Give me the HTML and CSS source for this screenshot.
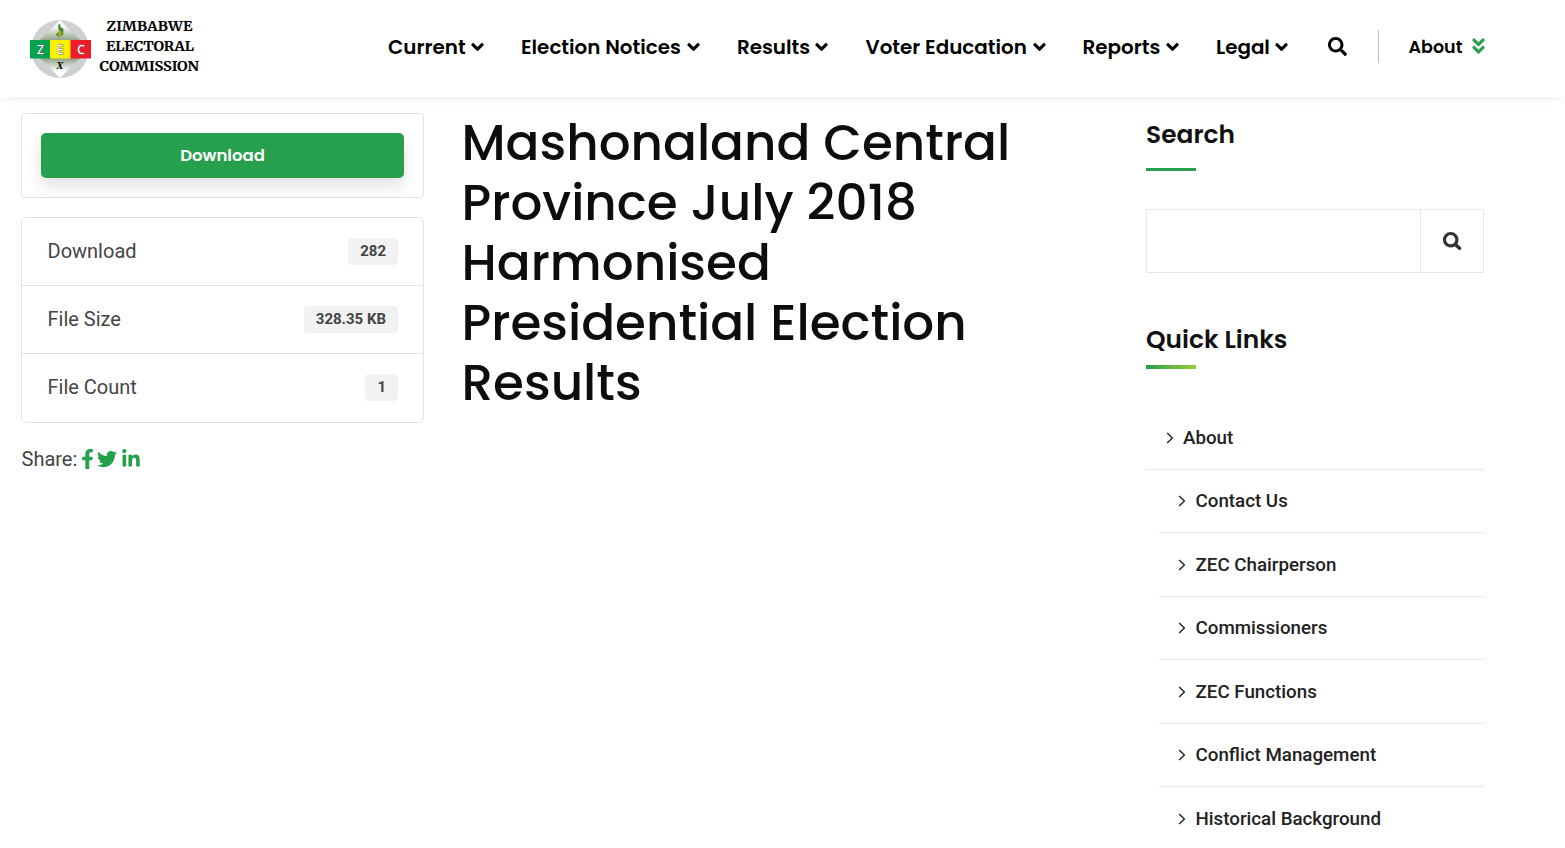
FILE: index.html
```html
<!DOCTYPE html>
<html lang="en">
<head>
<meta charset="utf-8">
<title>Mashonaland Central Province July 2018 Harmonised Presidential Election Results</title>
<link rel="stylesheet" href="styles.css">
</head>
<body>
<svg class="defs" width="0" height="0" aria-hidden="true">
  <symbol id="down" viewBox="0 0 320 512"><path d="M143 352.3L7 216.3c-9.4-9.4-9.4-24.6 0-33.9l22.6-22.6c9.4-9.4 24.6-9.4 33.9 0l96.4 96.4 96.4-96.4c9.4-9.4 24.6-9.4 33.9 0l22.6 22.6c9.4 9.4 9.4 24.6 0 33.9l-136 136c-9.2 9.4-24.4 9.4-33.8 0z"/></symbol>
  <symbol id="right" viewBox="0 0 8 12"><path d="M1.200 1 6.400 6 1.200 11" fill="none" stroke="currentColor" stroke-width="1.400"/></symbol>
</svg>
<header class="header">
  <a class="logo">
    <svg width="185" height="70" viewBox="0 0 185 70">
      <defs>
        <linearGradient id="up" x1="0" y1="0" x2="0" y2="1"><stop offset="0" stop-color="#fff"/><stop offset=".12" stop-color="#f4f6f3"/><stop offset=".36" stop-color="#8da084"/><stop offset=".66" stop-color="#8da084"/><stop offset=".88" stop-color="#fff"/></linearGradient>
      </defs>
      <circle cx="40" cy="39" r="29" fill="#cfd0d2"/>
      <path d="M40 10 69 39 40 68 11 39Z" fill="url(#up)"/>
      <path d="m38 15 2-1 .5 3 3 2-.5 6-4 2-3-2 1-2 2-1Z" fill="#3c8a2e"/><path d="m39 20 3 2-1 4-3 0Z" fill="#b8a51d"/>
      <path d="M10 30h21v18.500H10z" fill="#00a34e"/><path d="M30 30h21v18.500H30z" fill="#fdf100"/><path d="M50.500 30H71v18.500H50.500z" fill="#ee1c2a"/>
      <g class="logo-letters"><text x="20.500" y="43.500">Z</text><text x="40.300" y="43.500">E</text><text x="61" y="43.500">C</text></g>
      <text class="logo-x" x="40" y="58.500">X</text>
      <g class="logo-name"><text x="86.500" y="21" textLength="86">ZIMBABWE</text><text x="86" y="41" textLength="88">ELECTORAL</text><text x="79.500" y="61" textLength="99.500">COMMISSION</text></g>
    </svg>
  </a>
  <nav class="nav">
    <a class="n1"><span>Current</span><svg><use href="#down"/></svg></a>
    <a class="n2"><span>Election Notices</span><svg><use href="#down"/></svg></a>
    <a class="n3"><span>Results</span><svg><use href="#down"/></svg></a>
    <a class="n4"><span>Voter Education</span><svg><use href="#down"/></svg></a>
    <a class="n5"><span>Reports</span><svg><use href="#down"/></svg></a>
    <a class="n6"><span>Legal</span><svg><use href="#down"/></svg></a>
  </nav>
  <svg class="find" viewBox="0 0 512 512"><path d="M505 442.700L405.300 343c-4.500-4.500-10.600-7-17-7H372c27.600-35.300 44-79.700 44-128C416 93.100 322.900 0 208 0S0 93.100 0 208s93.100 208 208 208c48.300 0 92.700-16.400 128-44v16.300c0 6.400 2.500 12.500 7 17l99.700 99.700c9.400 9.400 24.600 9.400 33.900 0l28.300-28.300c9.400-9.400 9.400-24.600.1-34zM208 336c-70.700 0-128-57.200-128-128 0-70.700 57.200-128 128-128 70.700 0 128 57.200 128 128 0 70.700-57.200 128-128 128z"/></svg>
  <a class="about"><span>About</span><svg viewBox="0 0 320 512"><path d="M143 256.300L7 120.300c-9.400-9.400-9.400-24.600 0-33.900l22.600-22.600c9.400-9.400 24.600-9.400 33.900 0l96.400 96.400 96.400-96.400c9.400-9.400 24.600-9.400 33.900 0L313 86.300c9.400 9.400 9.400 24.600 0 33.900l-136 136c-9.400 9.500-24.600 9.500-34 .1zm34 192l136-136c9.400-9.400 9.400-24.600 0-33.900l-22.600-22.600c-9.400-9.400-24.600-9.400-33.900 0L160 352.100l-96.400-96.400c-9.400-9.400-24.600-9.400-33.900 0L7 278.300c-9.400 9.400-9.400 24.600 0 33.900l136 136c9.400 9.500 24.600 9.500 34 .1z"/></svg></a>
</header>
<main class="page">
  <section class="file">
    <div class="card"><a class="button">Download</a></div>
    <ul class="facts">
      <li>Download<span>282</span></li>
      <li>File Size<span>328.35 KB</span></li>
      <li>File Count<span>1</span></li>
    </ul>
    <div class="share"><span>Share:</span>
      <svg class="fb" viewBox="0 0 320 512"><path d="M279.140 288l14.220-92.660h-88.910v-60.130c0-25.350 12.420-50.060 52.240-50.060h40.420V6.260S260.430 0 225.360 0c-73.220 0-121.080 44.380-121.080 124.720v70.620H22.890V288h81.390v224h100.170V288z"/></svg>
      <svg class="tw" viewBox="0 0 512 512"><path d="M459.370 151.716c.325 4.548.325 9.097.325 13.645 0 138.720-105.583 298.558-298.558 298.558-59.452 0-114.680-17.219-161.137-47.106 8.447.974 16.568 1.299 25.340 1.299 49.055 0 94.213-16.568 130.274-44.832-46.132-.975-84.792-31.188-98.112-72.772 6.498.974 12.995 1.624 19.818 1.624 9.421 0 18.843-1.300 27.614-3.573-48.081-9.747-84.143-51.980-84.143-102.985v-1.299c13.969 7.797 30.214 12.670 47.431 13.319-28.264-18.843-46.781-51.005-46.781-87.391 0-19.492 5.197-37.360 14.294-52.954 51.655 63.675 129.300 105.258 216.365 109.807-1.624-7.797-2.599-15.918-2.599-24.040 0-57.828 46.782-104.934 104.934-104.934 30.213 0 57.502 12.670 76.670 33.137 23.715-4.548 46.456-13.320 66.599-25.340-7.798 24.366-24.366 44.833-46.132 57.827 21.117-2.273 41.584-8.122 60.426-16.243-14.292 20.791-32.161 39.308-52.628 54.253z"/></svg>
      <svg class="li" viewBox="0 0 448 512"><path d="M100.280 448H7.400V148.900h92.880zM53.790 108.100C24.090 108.100 0 83.500 0 53.800a53.790 53.790 0 0 1 107.580 0c0 29.700-24.100 54.300-53.790 54.300zM447.900 448h-92.680V302.400c0-34.700-.7-79.200-48.290-79.200-48.290 0-55.690 37.700-55.690 76.700V448h-92.780V148.900h89.080v40.800h1.300c12.400-23.500 42.690-48.300 87.880-48.300 94 0 111.280 61.900 111.280 142.300V448z"/></svg>
    </div>
  </section>
  <h1 class="title">Mashonaland Central Province July 2018 Harmonised Presidential Election Results</h1>
  <aside class="side">
    <h2 class="h-search">Search</h2>
    <i class="bar"></i>
    <form class="search"><input type="text" aria-label="Search"><button type="button" aria-label="Search"><svg viewBox="0 0 20 20"><circle cx="8.700" cy="8.700" r="6.200" fill="none" stroke="#333" stroke-width="3.200"/><path d="m13.500 13.500 4 3.700" stroke="#333" stroke-width="3.600" stroke-linecap="round"/></svg></button></form>
    <h2 class="h-links">Quick Links</h2>
    <i class="bar grad"></i>
    <ul class="links">
      <li><svg><use href="#right"/></svg>About</li>
      <li class="sub"><svg><use href="#right"/></svg>Contact Us</li>
      <li class="sub"><svg><use href="#right"/></svg>ZEC Chairperson</li>
      <li class="sub"><svg><use href="#right"/></svg>Commissioners</li>
      <li class="sub"><svg><use href="#right"/></svg>ZEC Functions</li>
      <li class="sub"><svg><use href="#right"/></svg>Conflict Management</li>
      <li class="sub"><svg><use href="#right"/></svg>Historical Background</li>
    </ul>
  </aside>
</main>
</body>
</html>
```
FILE: styles.css
```css
* { box-sizing: border-box; }
html, body { height: 848px; overflow: hidden; }
body { margin: 0; background: #fff; color: #444; font-family: Roboto, sans-serif; font-size: 20px; }
h1, h2, ul { margin: 0; padding: 0; list-style: none; }
.defs { display: block; }

.header { display: flex; align-items: center; height: 97px; padding-bottom: 4px; box-shadow: 0 0 10px rgba(0, 0, 0, .09); font-family: Poppins, sans-serif; font-weight: 600; color: #000; }
.logo { width: 368px; padding-left: 20px; height: 93px; padding-top: 10px; }
.logo-letters { font: 12px "Noto Sans", sans-serif; fill: #fff; stroke: #777; stroke-width: 1px; paint-order: stroke; text-anchor: middle; }
.logo-x { font: italic bold 11px "Liberation Serif", serif; text-anchor: middle; }
.logo-name { font: bold 14.500px Merriweather, "Liberation Serif", serif; stroke: #000; stroke-width: .1px; }
.nav { display: flex; margin-left: 20px; }
.nav a { display: flex; align-items: center; white-space: nowrap; font-size: 19.900px; line-height: 30px; padding-top: 1px; }
.nav svg { width: 13px; height: 20px; margin: 0 0 1px 5px; flex: none; }
.nav span { flex: none; }
.n1 { width: 133px; } .n1 span { width: 78px; }
.n2 { width: 216px; } .n2 span { width: 161px; }
.n3 { width: 128.500px; } .n3 span { width: 73px; }
.n4 { width: 217px; } .n4 span { width: 162px; }
.n5 { width: 133.500px; } .n5 span { width: 78px; }
.n6 { width: 111.500px; } .n6 span { width: 54px; }
.find { width: 19px; height: 19px; margin: 0 1px 1px 0; }
.about { display: flex; align-items: center; height: 33px; margin-left: 30px; padding-left: 30px; border-left: 1px solid #bbb; font-size: 17.500px; }
.about span { width: 63px; }
.about svg { width: 13px; height: 20px; margin-bottom: 1px; fill: #27a04d; }

.page { display: grid; grid-template-columns: 403px 722px 338px; padding: 16px 0 0 21px; }
.card { height: 85px; padding: 19px; border: 1px solid #e3e3e3; border-radius: 4px; }
.button { display: flex; align-items: center; justify-content: center; height: 45px; border-radius: 5px; background: #27a04d; color: #fff; font: 600 16.500px Poppins, sans-serif; box-shadow: 0 8px 16px rgba(0, 0, 0, .12); }
.facts { margin-top: 19px; border: 1px solid #e3e3e3; border-radius: 5px; }
.facts li { display: flex; align-items: center; justify-content: space-between; height: 68px; padding: 0 25px 1px 25.500px; border-bottom: 1px solid #e3e3e3; }
.facts li:last-child { padding-bottom: 2px; border: 0; }
.facts span { height: 27px; padding: 0 12px; border-radius: 4px; background: #f2f2f2; font-size: 15px; line-height: 27px; font-weight: 700; }
.share { display: flex; align-items: center; height: 28px; margin-top: 22px; padding-left: .5px; fill: #27a04d; }
.fb { width: 13px; height: 20px; margin-left: 3.500px; }
.tw { width: 20px; height: 20px; margin-left: 3px; }
.li { width: 18px; height: 20px; margin-left: 5px; }

.title { padding: 0 94px 0 37.500px; font: 500 50px/60px Poppins, sans-serif; color: #0d0d0d; }

.side h2 { font: 600 24.900px/36px Poppins, sans-serif; color: #111; }
.side .h-search { padding-top: 4px; }
.bar { display: block; width: 50px; height: 3px; margin-top: 15px; background: #27a04d; }
.search { display: flex; height: 64px; margin-top: 38px; border: 1px solid #e7e7eb; }
.search input { flex: 1; min-width: 0; padding: 0; border: 0; outline: 0; background: #fff; }
.search button { display: flex; align-items: center; justify-content: center; width: 63px; padding: 0; border: 0; border-left: 1px solid #e7e7eb; background: #fff; }
.search svg { width: 20px; height: 20px; }
.side .h-links { margin-top: 49px; }
.bar.grad { height: 4px; margin-top: 7px; background: linear-gradient(90deg, #27a04d, #9acb35); }
.links { margin-top: 37px; font-size: 18.750px; font-weight: 500; color: #222; }
.links li { display: flex; align-items: center; height: 63.500px; padding: 1px 0 0 19.500px; border-bottom: 1px solid #e8e8e8; }
.links .sub { margin-left: 13px; padding-left: 19px; }
.links svg { width: 8px; height: 12px; margin-right: 9.500px; }
```
